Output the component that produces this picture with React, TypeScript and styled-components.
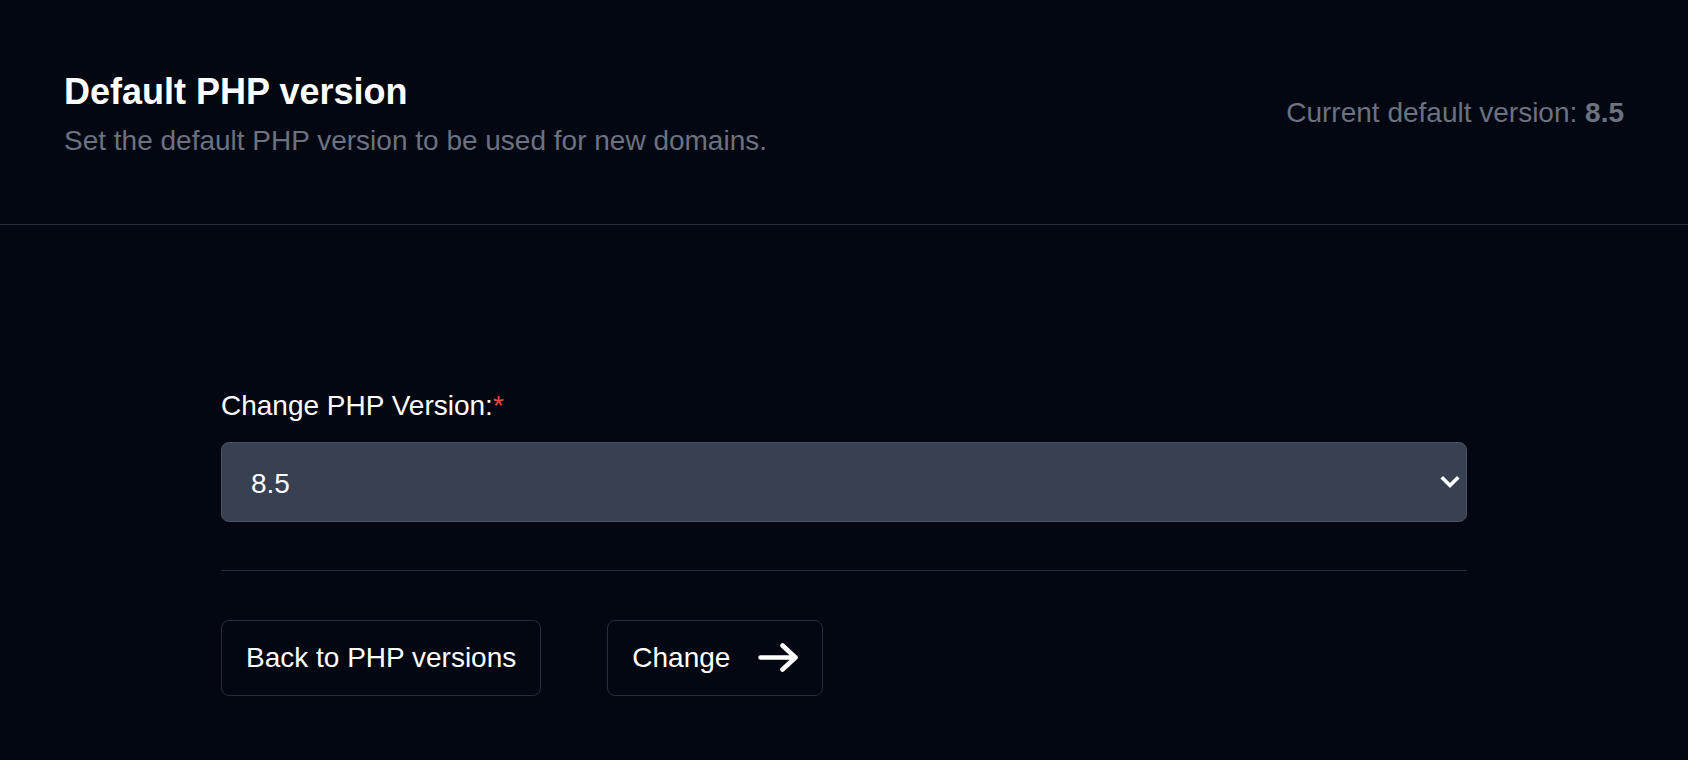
import styled, { createGlobalStyle } from "styled-components";

const GlobalStyle = createGlobalStyle`
  html, body {
    margin: 0;
    padding: 0;
    background: #030712;
  }
  body {
    font-family: "Liberation Sans", Arial, sans-serif;
    color: #ffffff;
  }
  * {
    box-sizing: border-box;
  }
`;

const Page = styled.main`
  min-height: 760px;
  background: #030712;
`;

const Header = styled.header`
  display: flex;
  align-items: center;
  justify-content: space-between;
  padding: 72px 64px 62px 64px;
  border-bottom: 1px solid #252d3b;
`;

const HeaderText = styled.div`
  display: flex;
  flex-direction: column;
  gap: 8px;
`;

const Title = styled.h1`
  margin: 0;
  font-size: 36px;
  line-height: 40px;
  font-weight: 700;
  color: #ffffff;
`;

const Subtitle = styled.p`
  margin: 0;
  font-size: 28px;
  line-height: 42px;
  color: #6b7280;
`;

const CurrentVersion = styled.div`
  font-size: 28px;
  line-height: 42px;
  color: #6b7280;
  margin-bottom: 9px;

  strong {
    font-weight: 700;
  }
`;

const Form = styled.form`
  max-width: 1246px;
  margin: 0 auto;
  padding-top: 160px;
  display: flex;
  flex-direction: column;
`;

const Label = styled.label`
  font-size: 28px;
  line-height: 42px;
  color: #ffffff;
  margin-bottom: 15px;
`;

const Required = styled.span`
  color: #ef4444;
`;

const SelectWrap = styled.div`
  position: relative;
`;

const Select = styled.select`
  appearance: none;
  width: 100%;
  height: 80px;
  padding: 2px 60px 0 29px;
  border: 1px solid #4b5563;
  border-radius: 8px;
  background: #374151;
  color: #ffffff;
  font-family: inherit;
  font-size: 28px;
  outline: none;
`;

const Chevron = styled.svg`
  position: absolute;
  right: 7px;
  top: 50%;
  transform: translateY(-50%);
  pointer-events: none;
`;

const Divider = styled.hr`
  margin: 48px 0 49px 0;
  border: 0;
  border-top: 1px solid #252d3b;
`;

const Actions = styled.div`
  display: flex;
  gap: 66px;
`;

const Button = styled.button`
  display: inline-flex;
  align-items: center;
  gap: 28px;
  padding: 16px 24px 17px 24px;
  border: 1px solid #252d3b;
  border-radius: 8px;
  background: #030712;
  color: #ffffff;
  font-family: inherit;
  font-size: 28px;
  line-height: 41px;
  cursor: pointer;
`;

function ArrowRight() {
  return (
    <svg width="40" height="30" viewBox="0 0 40 30" fill="none">
      <path
        d="M2.5 14.5H37.5M24.5 2.5L37.5 14.5L24.5 26.5"
        stroke="#ffffff"
        strokeWidth="4.6"
        strokeLinecap="round"
        strokeLinejoin="round"
      />
    </svg>
  );
}

export default function App() {
  return (
    <Page>
      <GlobalStyle />
      <Header>
        <HeaderText>
          <Title>Default PHP version</Title>
          <Subtitle>Set the default PHP version to be used for new domains.</Subtitle>
        </HeaderText>
        <CurrentVersion>
          Current default version: <strong>8.5</strong>
        </CurrentVersion>
      </Header>
      <Form onSubmit={(e) => e.preventDefault()}>
        <Label htmlFor="php-version">
          Change PHP Version:<Required>*</Required>
        </Label>
        <SelectWrap>
          <Select id="php-version" defaultValue="8.5">
            <option value="8.5">8.5</option>
            <option value="8.4">8.4</option>
            <option value="8.3">8.3</option>
            <option value="8.2">8.2</option>
            <option value="8.1">8.1</option>
          </Select>
          <Chevron width="20" height="14" viewBox="0 0 20 14" fill="none">
            <path
              d="M3 3.5L10 10.5L17 3.5"
              stroke="#ffffff"
              strokeWidth="3.6"
              strokeLinecap="square"
            />
          </Chevron>
        </SelectWrap>
        <Divider />
        <Actions>
          <Button type="button">Back to PHP versions</Button>
          <Button type="submit">
            Change
            <ArrowRight />
          </Button>
        </Actions>
      </Form>
    </Page>
  );
}
